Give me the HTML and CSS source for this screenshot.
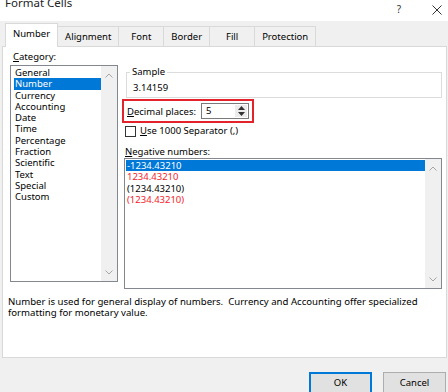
FILE: index.html
```html
<!DOCTYPE html>
<html>
<head>
	<meta charset="utf-8">
	<title>Format Cells</title>
	<link rel="stylesheet" href="styles.css">
</head>
<body>
	<div class="dialog">
		<div class="titlebar">
			<span class="title">Format Cells</span>
			<span class="help">?</span>
			<svg class="close" width="10" height="10" viewBox="0 0 10 10">
				<path d="M0.5 0.5 L9.5 9.5 M9.5 0.5 L0.5 9.5" stroke="#333" stroke-width="1" fill="none"/>
			</svg>
		</div>
		<div class="tabs">
			<div class="tab active">Number</div>
			<div class="tab">Alignment</div>
			<div class="tab">Font</div>
			<div class="tab">Border</div>
			<div class="tab">Fill</div>
			<div class="tab">Protection</div>
		</div>
		<div class="panel">
			<div class="columns">
				<div class="left">
					<div class="label"><u>C</u>ategory:</div>
					<div class="listbox category">
						<ul class="items">
							<li>General</li>
							<li class="selected">Number</li>
							<li>Currency</li>
							<li>Accounting</li>
							<li>Date</li>
							<li>Time</li>
							<li>Percentage</li>
							<li>Fraction</li>
							<li>Scientific</li>
							<li>Text</li>
							<li>Special</li>
							<li>Custom</li>
						</ul>
						<div class="scrollbar">
							<svg width="8" height="5" viewBox="0 0 8 5"><path d="M0.5 4.5 L4 1 L7.5 4.5" stroke="#a6a6a6" fill="none"/></svg>
							<svg width="8" height="5" viewBox="0 0 8 5"><path d="M0.5 0.5 L4 4 L7.5 0.5" stroke="#a6a6a6" fill="none"/></svg>
						</div>
					</div>
				</div>
				<div class="right">
					<fieldset class="sample">
						<legend>Sample</legend>
						<div class="value">3.14159</div>
					</fieldset>
					<div class="decimals">
						<span><u>D</u>ecimal places:</span>
						<div class="spin">
							<span class="num">5</span>
							<div class="spinbtns">
								<svg width="7" height="4" viewBox="0 0 7 4"><path d="M0 4 L3.5 0 L7 4 Z" fill="#333"/></svg>
								<svg width="7" height="4" viewBox="0 0 7 4"><path d="M0 0 L3.5 4 L7 0 Z" fill="#333"/></svg>
							</div>
						</div>
					</div>
					<div class="check">
						<span class="box"></span>
						<span><u>U</u>se 1000 Separator (,)</span>
					</div>
					<div class="label neg"><u>N</u>egative numbers:</div>
					<div class="listbox negative">
						<ul class="items">
							<li class="selected">-1234.43210</li>
							<li class="red">1234.43210</li>
							<li>(1234.43210)</li>
							<li class="red">(1234.43210)</li>
						</ul>
						<div class="scrollbar">
							<svg width="8" height="5" viewBox="0 0 8 5"><path d="M0.5 4.5 L4 1 L7.5 4.5" stroke="#a6a6a6" fill="none"/></svg>
							<svg width="8" height="5" viewBox="0 0 8 5"><path d="M0.5 0.5 L4 4 L7.5 0.5" stroke="#a6a6a6" fill="none"/></svg>
						</div>
					</div>
				</div>
			</div>
			<p class="desc">Number is used for general display of numbers.&nbsp; Currency and Accounting offer specialized<br>formatting for monetary value.</p>
		</div>
		<div class="buttons">
			<div class="btn ok">OK</div>
			<div class="btn">Cancel</div>
		</div>
	</div>
</body>
</html>
```
FILE: styles.css
```css
*{
	box-sizing: border-box;
}
body{
	margin: 0;
	background-color: #f0f0f0;
	font-family: "Noto Sans", "Liberation Sans", sans-serif;
	font-size: 9.5px;
	color: #000;
}
.dialog{
	width: 448px;
	height: 392px;
	overflow: hidden;
	display: flex;
	flex-direction: column;
}
.titlebar{
	flex: none;
	height: 21px;
	background-color: #fff;
	display: flex;
	align-items: flex-start;
	padding-left: 5px;
}
.title{
	font-size: 11.5px;
	line-height: 12px;
	margin-top: -3px;
	color: #222;
}
.help{
	margin-left: auto;
	margin-top: 3px;
	font-size: 10px;
	line-height: 12px;
	color: #333;
}
.close{
	margin: 5px 6px 0 31px;
}
.tabs{
	flex: none;
	height: 25px;
	display: flex;
	align-items: flex-end;
	padding-left: 5px;
}
.tab{
	min-width: 46px;
	height: 20px;
	line-height: 19px;
	padding: 0 7px;
	text-align: center;
	border: 1px solid #d9d9d9;
	border-bottom: none;
	margin-right: -1px;
}
.tab.active{
	height: 24px;
	line-height: 20px;
	margin-bottom: -1px;
	background-color: #fff;
	position: relative;
	z-index: 1;
}
.panel{
	flex: none;
	height: 312px;
	margin: 0 1px 0 2px;
	background-color: #fff;
	border: 1px solid #d9d9d9;
	padding: 0 4px 0 5px;
}
.columns{
	display: flex;
	gap: 4px;
	padding-left: 2px;
}
.left{
	width: 108px;
}
.label{
	line-height: 12px;
	margin: 4px 0 2px 3px;
}
.listbox{
	display: flex;
	border: 1px solid #828790;
}
.listbox.category{
	height: 217px;
}
.items{
	flex: 1;
	list-style: none;
	margin: 0;
	padding: 1px 0 0 3px;
}
.items li{
	line-height: 11.3px;
	padding-left: 1px;
	white-space: nowrap;
}
.items .selected{
	background-color: #0078d7;
	color: #fff;
}
.items .red{
	color: #f5222d;
}
.scrollbar{
	width: 16px;
	background-color: #f0f0f0;
	display: flex;
	flex-direction: column;
	justify-content: space-between;
	align-items: center;
	padding: 7px 0 6px;
}
.right{
	flex: 1;
}
.sample{
	margin: 19px 0 0 4px;
	padding: 4px 6px 3px 3px;
	border: 1px solid #dcdcdc;
	min-width: 0;
}
.sample legend{
	padding: 0 2px;
	line-height: 12px;
}
.value{
	line-height: 12px;
	padding-left: 3px;
}
.decimals{
	margin-top: 1px;
	width: 132px;
	height: 24px;
	border: 2px solid #e3232b;
	display: flex;
	align-items: center;
	padding-left: 3px;
}
.spin{
	margin-left: auto;
	margin-right: 3px;
	width: 48px;
	height: 16px;
	border: 1px solid #7a7a7a;
	display: flex;
}
.num{
	flex: 1;
	line-height: 14px;
	padding-left: 4px;
}
.spinbtns{
	width: 12px;
	margin: 1px;
	background-color: #ececec;
	display: flex;
	flex-direction: column;
	justify-content: space-around;
	align-items: center;
}
.check{
	display: flex;
	align-items: center;
	gap: 4px;
	margin: 2px 0 0 3px;
	line-height: 12px;
}
.box{
	width: 11px;
	height: 11px;
	border: 1px solid #333;
	background-color: #fff;
}
.label.neg{
	margin: 9px 0 0 3px;
}
.listbox.negative{
	height: 131px;
	margin-left: 2px;
}
.listbox.negative .items{
	padding-left: 1px;
}
.desc{
	margin: 7px 0 0;
	font-size: 9.6px;
	line-height: 11px;
	white-space: nowrap;
}
.buttons{
	display: flex;
	justify-content: flex-end;
	gap: 11px;
	padding: 14px 2px 0 0;
}
.btn{
	width: 63px;
	height: 22px;
	line-height: 20px;
	text-align: center;
	background-color: #e1e1e1;
	border: 1px solid #adadad;
}
.btn.ok{
	border-color: #0078d7;
	box-shadow: inset 0 0 0 1px #0078d7;
}
```
